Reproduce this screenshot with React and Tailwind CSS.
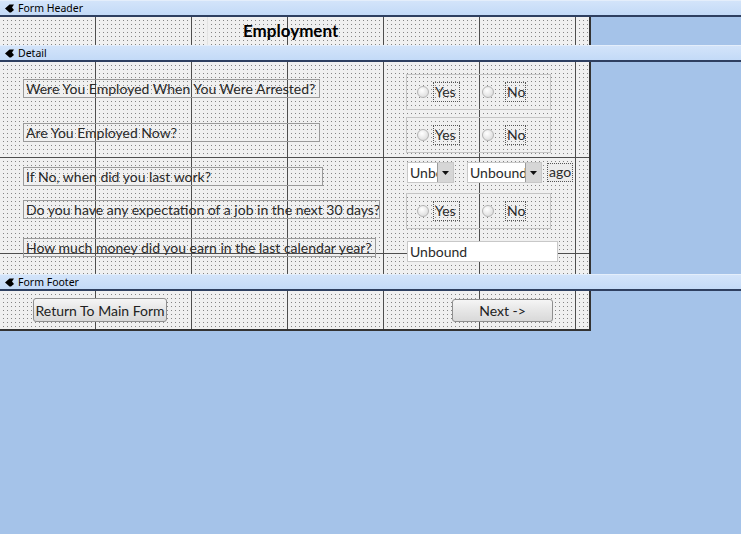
import React from "react";

const canvasBase =
  "relative bg-[#858585] bg-[image:linear-gradient(to_right,transparent_95px,#4d4d4d_95px,#4d4d4d_96px),linear-gradient(to_right,#f0f0f0_3px,transparent_3px),linear-gradient(to_bottom,#f0f0f0_3px,transparent_3px)] bg-[size:96px_100%,4px_4px,4px_4px]";

const detailCanvas =
  "relative bg-[#858585] bg-[image:linear-gradient(to_bottom,transparent_95px,#4d4d4d_95px,#4d4d4d_96px),linear-gradient(to_right,transparent_95px,#4d4d4d_95px,#4d4d4d_96px),linear-gradient(to_right,#f0f0f0_3px,transparent_3px),linear-gradient(to_bottom,#f0f0f0_3px,transparent_3px)] bg-[size:100%_96px,96px_100%,4px_4px,4px_4px]";

function SectionBar({ label }) {
  return (
    <div className="h-[17px] w-full flex items-center gap-[4px] pl-[5px] border-t border-[#e4eefb] border-b-2 border-b-[#2e3f60] bg-[linear-gradient(to_bottom,#d3e4fa,#c3daf7)] text-[10.5px] leading-none text-black font-['Noto_Sans',sans-serif]">
      <svg width="9" height="9" viewBox="0 0 9 9" className="shrink-0">
        <polygon points="0,4.5 4.5,0.5 9,0.5 7,3.5 9,6 6,8.5 4.5,8.5" fill="#000" />
      </svg>
      <span>{label}</span>
    </div>
  );
}

function Label({ className, children }) {
  return (
    <div
      className={
        "absolute h-[19px] border border-[#9a9a9a] pl-[2px] text-[14px] leading-[17px] text-[#2a2a2a] whitespace-nowrap overflow-hidden " +
        className
      }
    >
      {children}
    </div>
  );
}

function Radio() {
  return (
    <span className="block w-[12px] h-[12px] rounded-full border border-[#b5b5b5] bg-[radial-gradient(circle_at_40%_35%,#ffffff,#d4d4d4)]" />
  );
}

function OptionGroup({ className }) {
  return (
    <div
      className={
        "absolute w-[145px] h-[36px] border border-[#c4c4c4] flex items-center " +
        className
      }
    >
      <div className="ml-[10px]">
        <Radio />
      </div>
      <div className="ml-[4px] w-[27px] h-[20px] border border-dotted border-[#555] pl-[1px] text-[14px] leading-[18px] text-[#2a2a2a]">
        Yes
      </div>
      <div className="ml-[22px]">
        <Radio />
      </div>
      <div className="ml-[11px] w-[21px] h-[20px] border border-dotted border-[#555] pl-[1px] text-[14px] leading-[18px] text-[#2a2a2a]">
        No
      </div>
    </div>
  );
}

function Combo({ className, text }) {
  return (
    <div
      className={
        "absolute h-[21px] bg-white border border-[#c8c8c8] flex text-[14px] leading-[19px] text-[#2a2a2a] " +
        className
      }
    >
      <div className="flex-1 overflow-hidden whitespace-nowrap pl-[2px]">{text}</div>
      <div className="w-[16px] h-full bg-[#d6d6d6] border-l border-[#9c9c9c] flex items-center justify-center">
        <svg width="7" height="4" viewBox="0 0 7 4">
          <polygon points="0,0 7,0 3.5,4" fill="#111" />
        </svg>
      </div>
    </div>
  );
}

function Button({ className, children }) {
  return (
    <div
      className={
        "absolute rounded-[3px] border border-[#8f8f8f] bg-[linear-gradient(to_bottom,#f5f5f5,#e6e6e6_50%,#d9d9d9)] flex items-center justify-center text-[14px] text-[#222] " +
        className
      }
    >
      {children}
    </div>
  );
}

export default function App() {
  return (
    <div className="w-[741px] h-[534px] bg-[#a5c3e9] overflow-hidden font-['Lato',sans-serif]">
      <SectionBar label="Form Header" />
      <div className={canvasBase + " w-[591px] h-[28px] border-r-2 border-[#333]"}>
        <div className="absolute left-[207px] top-0 h-full w-px bg-[#e2e2e2]" />
        <div className="absolute left-[243px] top-[3px] text-[17px] font-bold leading-[22px] text-black">
          Employment
        </div>
      </div>
      <SectionBar label="Detail" />
      <div className={detailCanvas + " w-[591px] h-[212px] border-r-2 border-[#333]"}>
        <Label className="left-[23px] top-[17px] w-[297px]">
          Were You Employed When You Were Arrested?
        </Label>
        <Label className="left-[23px] top-[61px] w-[297px]">Are You Employed Now?</Label>
        <Label className="left-[23px] top-[105px] w-[300px]">If No, when did you last work?</Label>
        <Label className="left-[23px] top-[138px] w-[357px]">
          Do you have any expectation of a job in the next 30 days?
        </Label>
        <Label className="left-[23px] top-[176px] w-[353px]">
          How much money did you earn in the last calendar year?
        </Label>

        <OptionGroup className="left-[406px] top-[12px]" />
        <OptionGroup className="left-[406px] top-[55px]" />
        <OptionGroup className="left-[406px] top-[131px]" />

        <Combo className="left-[407px] top-[100px] w-[47px]" text="Unbound" />
        <Combo className="left-[467px] top-[100px] w-[75px]" text="Unbound" />
        <div className="absolute left-[547px] top-[101px] w-[26px] h-[19px] border border-dotted border-[#555] bg-[#ececec] pl-[1px] text-[14px] leading-[16px] text-[#2a2a2a]">
          ago
        </div>

        <div className="absolute left-[407px] top-[179px] w-[151px] h-[21px] bg-white border border-[#c8c8c8] pl-[2px] text-[14px] leading-[19px] text-[#2a2a2a]">
          Unbound
        </div>
      </div>
      <SectionBar label="Form Footer" />
      <div className={canvasBase + " w-[591px] h-[40px] border-r-2 border-b-2 border-[#333]"}>
        <Button className="left-[33px] top-[7px] w-[134px] h-[24px]">Return To Main Form</Button>
        <Button className="left-[452px] top-[8px] w-[101px] h-[23px]">Next -&gt;</Button>
      </div>
    </div>
  );
}
